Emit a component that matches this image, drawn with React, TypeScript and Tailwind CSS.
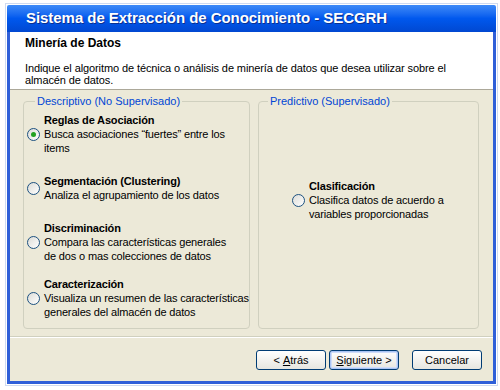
import React from "react";

function Radio({ checked = false }: { checked?: boolean }) {
  return (
    <span className="relative inline-flex shrink-0 w-[13px] h-[13px] rounded-full border border-[#1c5180] bg-gradient-to-br from-[#dcdcd7] to-white items-center justify-center">
      {checked && <span className="w-[5px] h-[5px] rounded-full bg-[#21a121]" />}
    </span>
  );
}

function Option({
  title,
  lines,
  checked,
  className = "",
}: {
  title: string;
  lines: string[];
  checked?: boolean;
  className?: string;
}) {
  return (
    <div className={"flex items-center gap-[4px] " + className}>
      <Radio checked={checked} />
      <div className="flex flex-col whitespace-nowrap tracking-[-0.15px]">
        <div className="font-bold leading-[14px] text-[11px] text-black">{title}</div>
        {lines.map((l, i) => (
          <div key={i} className="leading-[14px] text-[11px] text-black">
            {l}
          </div>
        ))}
      </div>
    </div>
  );
}

function Btn({ children, def = false }: { children: React.ReactNode; def?: boolean }) {
  return (
    <button
      className={
        "w-[70px] h-[20px] rounded-[3px] border border-[#003c74] bg-gradient-to-b from-white to-[#e6e6e0] text-[11px] text-black leading-none flex items-center justify-center " +
        (def ? "shadow-[inset_0_0_0_1px_#a9c4f5,inset_0_0_0_2px_#cfdcf8]" : "")
      }
    >
      {children}
    </button>
  );
}

export default function App() {
  return (
    <div
      className="w-[500px] h-[390px] bg-white pl-[5px] pt-[3px] overflow-hidden"
      style={{ fontFamily: '"Liberation Sans", Arial, sans-serif' }}
    >
      <div className="w-[493px] h-[383px] border border-[#cfdaf0] p-px flex flex-col">
        <div className="h-[27px] shrink-0 bg-gradient-to-b from-[#3d8af7] via-[#0058ee] to-[#0148d1] flex items-center pl-[19px] rounded-t-[2px]">
          <span className="text-white font-bold text-[15px] tracking-[-0.05px] [text-shadow:1px_1px_0_#0b2f8f]">
            Sistema de Extracción de Conocimiento - SECGRH
          </span>
        </div>
        <div className="flex-1 flex flex-col border-x-[3px] border-b-[3px] border-[#2f5fd8]">
          <div className="h-[58px] bg-white border-b border-[#aca899] pl-[15px] pt-[4px] shrink-0">
            <div className="font-bold text-[12px] leading-[14px] text-black">Minería de Datos</div>
            <div className="mt-[12px] text-[11px] leading-[12px] text-black tracking-[-0.1px] whitespace-nowrap">
              Indique el algoritmo de técnica o análisis de minería de datos que desea utilizar sobre el
              <br />
              almacén de datos.
            </div>
          </div>
          <div className="flex-1 bg-[#ece9d8] flex flex-col">
            <div className="flex gap-[8px] pl-[13px] pr-[12px] pt-[5px]">
              <fieldset className="min-w-0 w-[227px] shrink-0 h-[234px] border border-[#d0d0bf] rounded-[4px] px-[3px]">
                <legend className="text-[11px] leading-[13px] text-[#0046d5] px-[2px] ml-[8px]">
                  Descriptivo (No Supervisado)
                </legend>
                <Option
                  className="mt-[5px]"
                  checked
                  title="Reglas de Asociación"
                  lines={["Busca asociaciones “fuertes” entre los", "items"]}
                />
                <Option
                  className="mt-[19px]"
                  title="Segmentación (Clustering)"
                  lines={["Analiza el agrupamiento de los datos"]}
                />
                <Option
                  className="mt-[19px]"
                  title="Discriminación"
                  lines={["Compara las características generales", "de dos o mas colecciones de datos"]}
                />
                <Option
                  className="mt-[14px]"
                  title="Caracterización"
                  lines={["Visualiza un resumen de las características", "generales del almacén de datos"]}
                />
              </fieldset>
              <fieldset className="min-w-0 w-[221px] shrink-0 h-[234px] border border-[#d0d0bf] rounded-[4px] pl-[33px]">
                <legend className="text-[11px] leading-[13px] text-[#0046d5] px-[2px] ml-[-24px]">
                  Predictivo (Supervisado)
                </legend>
                <Option
                  className="mt-[71px]"
                  title="Clasificación"
                  lines={["Clasifica datos de acuerdo a", "variables proporcionadas"]}
                />
              </fieldset>
            </div>
            <div className="mt-[7px] border-t border-[#d0d0bf] shadow-[0_1px_0_white]" />
            <div className="flex justify-end pr-[11px] mt-[13px]">
              <div className="flex gap-[3px]">
                <Btn>
                  &lt;&nbsp;<span className="underline">A</span>trás
                </Btn>
                <Btn def>
                  <span className="underline">S</span>iguiente &gt;
                </Btn>
              </div>
              <div className="ml-[13px]">
                <Btn>Cancelar</Btn>
              </div>
            </div>
          </div>
        </div>
      </div>
    </div>
  );
}
